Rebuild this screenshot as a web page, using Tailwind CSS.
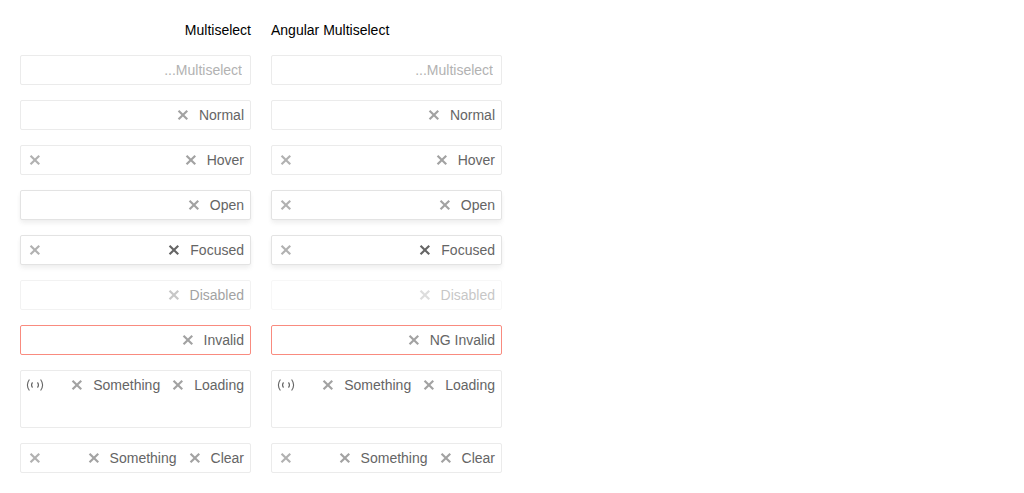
<!DOCTYPE html>
<html lang="en">
<head>
<meta charset="utf-8">
<meta name="viewport" content="width=device-width, initial-scale=1">
<title>Multiselect</title>
<script src="https://cdn.jsdelivr.net/npm/@tailwindcss/browser@4"></script>
</head>
<body class="bg-white font-['Liberation_Sans',Arial,sans-serif] text-sm text-[#656565]">
<svg class="hidden" aria-hidden="true">
  <symbol id="x" viewBox="0 0 16 16"><path fill="currentColor" d="M13 4.400 11.500 2.900 7.900 6.500 4.300 2.900 2.800 4.400 6.400 8 2.800 11.600 4.300 13.100 7.900 9.500 11.500 13.100 13 11.600 9.400 8z"/></symbol>
  <symbol id="loading" viewBox="0 0 18 16"><path fill="none" stroke="currentColor" stroke-width="1.1" d="M3.400 2.500Q-.6 8 3.400 13.500M14.600 2.500Q18.600 8 14.600 13.500"/><path fill="none" stroke="currentColor" stroke-width="1.1" d="M6.500 5.300Q4.500 8 6.500 10.700M11.500 5.300Q13.500 8 11.500 10.700"/></symbol>
</svg>
<main id="fields" class="grid max-w-[522px] grid-cols-2 items-start gap-x-5 gap-y-[15px] p-5">
  <h2 class="text-right text-black">Multiselect</h2>
  <h2 class="text-black">Angular Multiselect</h2>
</main>
<script>
const icon = name => `<svg class="${name === 'x' ? 'size-4' : 'h-4 w-[18px]'}" aria-hidden="true"><use href="#${name}"/></svg>`;
const looks = {
  normal: 'border-[#ebebeb]',
  raised: 'border-[#e3e3e3] shadow-[0_2px_4px_rgba(0,0,0,0.03),0_4px_5px_rgba(0,0,0,0.04)]',
  disabled: 'border-[#ebebeb] opacity-60',
  faded: 'border-[#ebebeb] opacity-36',
  invalid: 'border-[#f98b7f]'
};
// Each row: tags, then [look, end icon] for the plain and the Angular widget
const rows = [
  [[], ['normal'], ['normal']],
  [['Normal'], ['normal'], ['normal']],
  [['Hover'], ['normal', 'clear'], ['normal', 'clear']],
  [['Open'], ['raised'], ['raised', 'clear']],
  [['Focused'], ['raised', 'clear'], ['raised', 'clear']],
  [['Disabled'], ['disabled'], ['faded']],
  [['Invalid'], ['invalid'], ['invalid']],
  [['Loading', 'Something'], ['normal', 'loading'], ['normal', 'loading']],
  [['Clear', 'Something'], ['normal', 'clear'], ['normal', 'clear']]
];
const field = (tags, [look, end]) => {
  const off = look === 'disabled' || look === 'faded' ? 'disabled' : '';
  const tagHtml = tags.map(t => `<li class="flex h-7 items-center"><span dir="ltr">${t}</span><button type="button" ${off} aria-label="Remove ${t}" class="flex h-7 w-8 items-center justify-center ${t === 'Focused' ? '' : 'opacity-60'}">${icon('x')}</button></li>`).join('');
  const endHtml = end === 'clear'
    ? `<button type="button" aria-label="Clear all" class="flex size-7 items-center justify-center opacity-50">${icon('x')}</button>`
    : end === 'loading'
    ? `<span role="status" aria-label="Loading" class="flex size-7 items-center justify-center">${icon('loading')}</span>`
    : '<span class="size-7"></span>';
  return `<div dir="rtl" class="flex items-start rounded-xs border bg-white ${looks[look]}">
    <ul class="flex min-w-0 flex-1 flex-wrap gap-x-0.5 ${tags.length ? 'pr-1.5' : 'pr-2'}">${tagHtml}
      <li class="flex h-7 min-w-5 flex-1"><input dir="ltr" type="text" ${off} aria-label="${tags[0] || 'Multiselect'}" placeholder="${tags.length ? '' : '...Multiselect'}" class="w-full min-w-0 text-right outline-none placeholder:text-[#b2b2b2]"></li>
    </ul>${endHtml}</div>`;
};
document.getElementById('fields').insertAdjacentHTML('beforeend', rows.map(([tags, plain, angular], i) =>
  field(tags, plain) + field(i === 6 ? ['NG Invalid'] : tags, angular)).join(''));
</script>
</body>
</html>
